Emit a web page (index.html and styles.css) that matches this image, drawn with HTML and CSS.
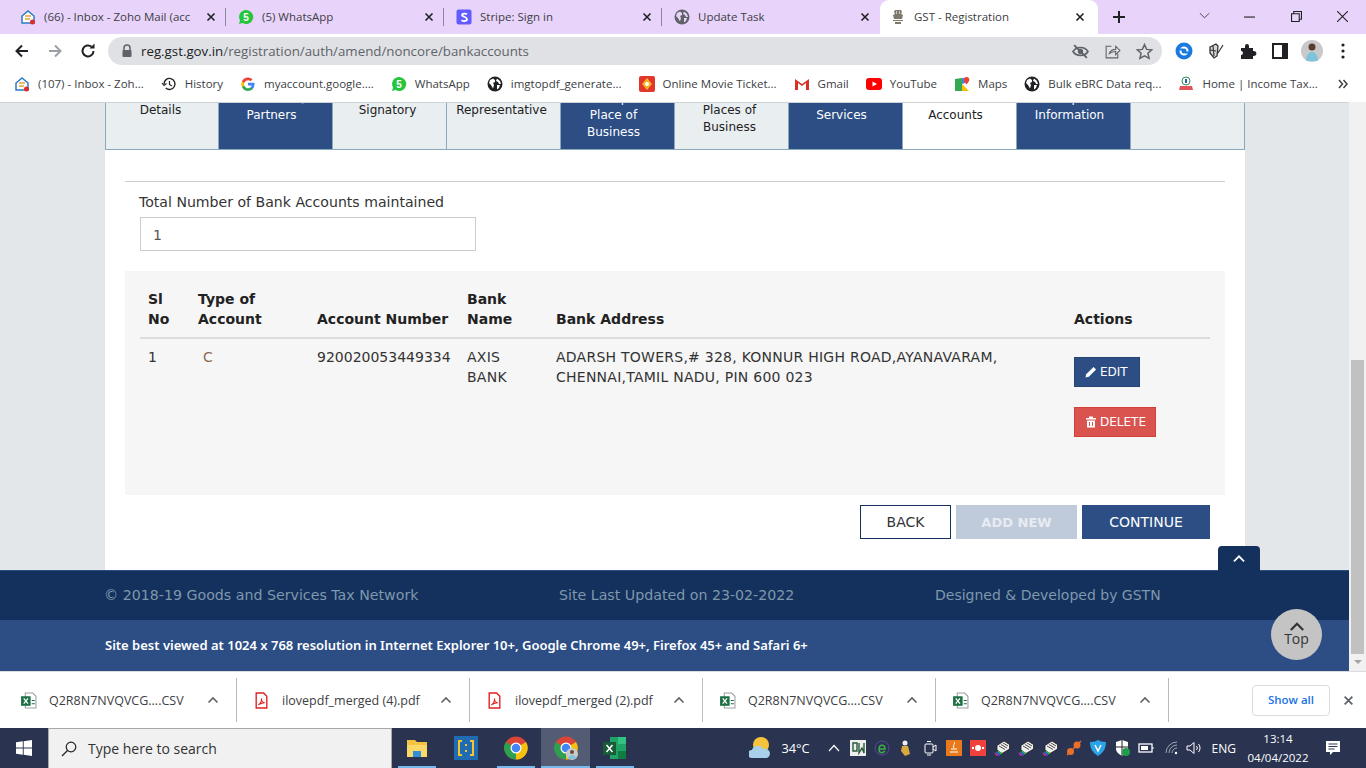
FILE: index.html
```html
<!DOCTYPE html>
<html lang="en">
<head>
    <meta charset="UTF-8">
    <title>GST - Registration</title>
    <link rel="stylesheet" href="styles.css">
</head>
<body>
    <svg width="0" height="0" class="defs">
        <symbol id="ic-globe" viewBox="0 0 16 16"><circle cx="8" cy="8" r="7.500" fill="#202124"/><path d="M3 4l3-1.500 2 1.500 0 2-2 1 1 2-1 3.500-2-3.500-2-2zM10 2.500l3 2.500 1 3-2 0-1-2-2-1zM10 9l3 0-1 3-2 1.500z" fill="#fff"/></symbol>
        <symbol id="ic-zoho" viewBox="0 0 16 16"><path d="M2 7l6-5 6 5v7H2z" fill="#fff" stroke="#2c7bc4" stroke-width="1.500"/><path d="M5 7h6M5 10h5" stroke="#e3a63a" stroke-width="1.500"/><circle cx="12.500" cy="13" r="2.500" fill="#e02b2b"/></symbol>
        <symbol id="ic-wa" viewBox="0 0 16 16"><path d="M8 1a7 7 0 0 0-6 10.500L1 15l3.600-1A7 7 0 1 0 8 1z" fill="#25c63e"/><text x="8" y="11.500" font-size="10" font-weight="700" text-anchor="middle" fill="#fff" font-family="Liberation Sans">5</text></symbol>
        <symbol id="ic-xls" viewBox="0 0 16 16"><path d="M5 1h7l3 3v11H5z" fill="#fff" stroke="#9aa0a6"/><rect x="1" y="4" width="9" height="9" fill="#1d7044"/><path d="M3.500 6l4 5M7.500 6l-4 5" stroke="#fff" stroke-width="1.200"/><path d="M11 8h3M11 11h3" stroke="#1d7044"/></symbol>
        <symbol id="ic-pdf" viewBox="0 0 16 16"><path d="M3 1h7l3 3v11H3z" fill="#fff" stroke="#e02020" stroke-width="1.300"/><path d="M5 12c2-1 3-4 3-6 0 3 2 4 3 4-2 0-4 1-6 2z" fill="none" stroke="#e02020"/></symbol>
        <symbol id="ic-chev" viewBox="0 0 12 8"><path d="M1.500 6.500L6 2l4.500 4.500" fill="none" stroke="currentColor" stroke-width="1.600"/></symbol>
        <symbol id="ic-close" viewBox="0 0 10 10"><path d="M1.500 1.500l7 7M8.500 1.500l-7 7" fill="none" stroke="currentColor" stroke-width="1.600"/></symbol>
        <symbol id="ic-printer" viewBox="0 0 16 16"><path d="M3 5.500L10 1l5.500 3.500V9L8 13.500 3 10z" fill="#f0f0f0" stroke="#222" stroke-width=".8"/><path d="M5 6l6 3.500M7 4.500l6 3.500M9 3l5 3" stroke="#222" stroke-width=".8"/><path d="M4 11l3.500 3" stroke="#2ad02a" stroke-width="1.500"/><path d="M2.500 12l3.500 3" stroke="#2f6bff" stroke-width="1.500"/><path d="M1 13l3 3" stroke="#d0309a" stroke-width="1.500"/></symbol>
    </svg>

    <div class="screen">
        <div class="tabstrip">
            <div class="tab">
                <svg class="fav"><use href="#ic-zoho"/></svg>
                <span class="tab-title">(66) - Inbox - Zoho Mail (acc</span>
                <svg class="tab-x"><use href="#ic-close"/></svg>
            </div>
            <div class="tab">
                <svg class="fav"><use href="#ic-wa"/></svg>
                <span class="tab-title">(5) WhatsApp</span>
                <svg class="tab-x"><use href="#ic-close"/></svg>
            </div>
            <div class="tab">
                <svg class="fav" viewBox="0 0 16 16"><rect x="0.500" y="0.500" width="15" height="15" rx="2" fill="#635bff"/><path d="M11 5.200C10 4.500 6 4 6 6c0 2 5 1.500 5 4.300 0 2.200-4 2-5.500 1" fill="none" stroke="#fff" stroke-width="1.800"/></svg>
                <span class="tab-title">Stripe: Sign in</span>
                <svg class="tab-x"><use href="#ic-close"/></svg>
            </div>
            <div class="tab">
                <svg class="fav" viewBox="0 0 16 16"><circle cx="8" cy="8" r="7.500" fill="#5f6368"/><path d="M3 4l3-1.500 2 1.500 0 2-2 1 1 2-1 3.500-2-3.500-2-2zM10 2.500l3 2.500 1 3-2 0-1-2-2-1zM10 9l3 0-1 3-2 1.500z" fill="#e8d3fb"/></svg>
                <span class="tab-title">Update Task</span>
                <svg class="tab-x"><use href="#ic-close"/></svg>
            </div>
            <div class="tab tab-active">
                <svg class="fav" viewBox="0 0 16 16"><path d="M5 1h6l1 2-1 2 2 1-1 4H4L3 6l2-1-1-2zM3 11h10v1H3zM5 13h6v2H5z" fill="#7d786c"/><path d="M6.500 2v3M9.500 2v3" stroke="#fff" stroke-width=".6"/></svg>
                <span class="tab-title">GST - Registration</span>
                <svg class="tab-x"><use href="#ic-close"/></svg>
            </div>
            <svg class="newtab" viewBox="0 0 14 14"><path d="M7 1v12M1 7h12" stroke="#202124" stroke-width="2"/></svg>
            <div class="win-btns">
                <svg class="win-ic win-drop" viewBox="0 0 12 8"><path d="M1 1l5 5 5-5" fill="none" stroke="#3c3c3c"/></svg>
                <svg class="win-ic win-min" viewBox="0 0 10 10"><path d="M0 5.500h10" stroke="#202124"/></svg>
                <svg class="win-ic win-max" viewBox="0 0 10 10"><path d="M.5 2.500h7v7h-7zM2.500 2.500v-2h7v7h-2" fill="none" stroke="#202124"/></svg>
                <svg class="win-ic win-cl" viewBox="0 0 10 10"><path d="M0 0l10 10M10 0L0 10" stroke="#202124"/></svg>
            </div>
        </div>

        <div class="toolbar">
            <svg class="nav-ic" viewBox="0 0 16 16"><path d="M14 8H3M8 2.500L2.500 8 8 13.500" fill="none" stroke="#202124" stroke-width="2"/></svg>
            <svg class="nav-ic" viewBox="0 0 16 16"><path d="M2 8h11M8 2.500L13.500 8 8 13.500" fill="none" stroke="#9aa0a6" stroke-width="2"/></svg>
            <svg class="nav-ic" viewBox="0 0 16 16"><path d="M13.500 8A5.500 5.500 0 1 1 11.500 3.700" fill="none" stroke="#202124" stroke-width="2"/><path d="M9.500 5.500H14.500V.5z" fill="#202124"/></svg>
            <div class="omnibox">
                <svg class="lock" viewBox="0 0 12 14"><path d="M3 6V4a3 3 0 0 1 6 0v2" fill="none" stroke="#5f6368" stroke-width="1.500"/><rect x="1.500" y="6" width="9" height="7" rx="1" fill="#5f6368"/></svg>
                <span class="url"><span class="url-host">reg.gst.gov.in</span>/registration/auth/amend/noncore/bankaccounts</span>
                <svg class="omni-ic" viewBox="0 0 16 16"><path d="M1 8c3-5 11-5 14 0-3 5-11 5-14 0z" fill="none" stroke="#5f6368" stroke-width="1.600"/><circle cx="8" cy="8" r="2.500" fill="#5f6368"/><path d="M2 2l12 12" stroke="#5f6368" stroke-width="1.800"/></svg>
                <svg class="omni-ic" viewBox="0 0 16 16"><path d="M7 3H2v11h11v-4" fill="none" stroke="#5f6368"/><path d="M5 10c1-3 3-4 6-4V3l4 4-4 4V8c-3 0-4 .5-6 2z" fill="none" stroke="#5f6368"/></svg>
                <svg class="omni-ic" viewBox="0 0 16 16"><path d="M8 1.500l2 4.500 4.800.4-3.600 3.200 1.100 4.800L8 12l-4.300 2.400 1.100-4.800L1.200 6.400 6 6z" fill="none" stroke="#5f6368" stroke-width="1.400"/></svg>
            </div>
            <div class="ext-row">
                <svg class="ext-ic" viewBox="0 0 18 18"><circle cx="9" cy="9" r="8.500" fill="#1a7ae0"/><circle cx="9" cy="9" r="3.500" fill="none" stroke="#fff" stroke-width="2"/><path d="M3 7.500h5M10 10.500h5" stroke="#1a7ae0" stroke-width="2"/></svg>
                <svg class="ext-ic" viewBox="0 0 18 18"><path d="M3 5l6-3 2 2-1 10-3 2-4-5z" fill="#d8d8d8" stroke="#333" stroke-width="1.300"/><path d="M11 11l5-8M6 4l1 10M3 8l6 1" fill="none" stroke="#333" stroke-width="1.200"/></svg>
                <svg class="ext-ic" viewBox="0 0 18 18"><path d="M2 6h4V4a2 2 0 0 1 4 0v2h4v3h1a2.500 2.500 0 0 1 0 5h-1v3H2v-4a2 2 0 0 0 0-4z" fill="#202124"/></svg>
                <svg class="ext-ic" viewBox="0 0 18 18"><path d="M2 2h14v14H2z" fill="#fff" stroke="#202124" stroke-width="2"/><path d="M11 2h5v14h-5z" fill="#202124"/></svg>
                <svg class="avatar" viewBox="0 0 22 22"><circle cx="11" cy="11" r="11" fill="#c9c9c9"/><circle cx="11" cy="7" r="3.500" fill="#5a3c2e"/><path d="M5 21c0-6 3-9 6-9s6 3 6 9z" fill="#7fc4dc"/></svg>
                <svg class="menu-dots" viewBox="0 0 4 16"><circle cx="2" cy="2" r="1.600"/><circle cx="2" cy="8" r="1.600"/><circle cx="2" cy="14" r="1.600"/></svg>
            </div>
        </div>

        <div class="bookmarks">
            <div class="bm"><svg class="fav"><use href="#ic-zoho"/></svg><span>(107) - Inbox - Zoh...</span></div>
            <div class="bm"><svg class="fav" viewBox="0 0 16 16"><path d="M3 8a5.500 5.500 0 1 1 1.800 4" fill="none" stroke="#202124" stroke-width="1.400"/><path d="M1 7l2 2.500L5.500 7.500M8.500 5v3.500l2.500 1.500" fill="none" stroke="#202124" stroke-width="1.200"/></svg><span>History</span></div>
            <div class="bm"><svg class="fav" viewBox="0 0 16 16"><path d="M14.500 8.200c0-.5 0-1-.1-1.400H8v2.700h3.700a3.200 3.200 0 0 1-1.400 2.100v1.700h2.200a6.600 6.600 0 0 0 2-5.100z" fill="#4285f4"/><path d="M8 15c1.900 0 3.400-.6 4.500-1.700l-2.200-1.700a4 4 0 0 1-6.100-2.100H2v1.800A6.700 6.700 0 0 0 8 15z" fill="#34a853"/><path d="M4.200 9.500a4 4 0 0 1 0-2.600V5.100H2a6.700 6.700 0 0 0 0 6.200z" fill="#fbbc05"/><path d="M8 4.200c1 0 1.900.4 2.600 1l1.900-2A6.700 6.700 0 0 0 2 5.100l2.200 1.800A4 4 0 0 1 8 4.200z" fill="#ea4335"/></svg><span>myaccount.google....</span></div>
            <div class="bm"><svg class="fav"><use href="#ic-wa"/></svg><span>WhatsApp</span></div>
            <div class="bm"><svg class="fav"><use href="#ic-globe"/></svg><span>imgtopdf_generate...</span></div>
            <div class="bm"><svg class="fav" viewBox="0 0 16 16"><rect width="16" height="16" rx="2" fill="#e2362b"/><path d="M8 2l5 6-5 6-5-6z" fill="#f5b324"/><circle cx="8" cy="8" r="2" fill="#fff"/></svg><span>Online Movie Ticket...</span></div>
            <div class="bm"><svg class="fav" viewBox="0 0 16 16"><path d="M1 3v11h3V7l4 3 4-3v7h3V3l-7 5z" fill="#d93025"/></svg><span>Gmail</span></div>
            <div class="bm"><svg class="fav" viewBox="0 0 16 16"><rect y="2" width="16" height="12" rx="3" fill="#f00"/><path d="M6.500 5.500v5L11 8z" fill="#fff"/></svg><span>YouTube</span></div>
            <div class="bm"><svg class="fav" viewBox="0 0 16 16"><path d="M1 3l7-1v13l-7 0z" fill="#34a853"/><path d="M8 8l7 7H8z" fill="#fbbc05"/><path d="M8 2h3v5L8 8z" fill="#4285f4"/><path d="M12.500 1a2.800 2.800 0 0 1 2.800 2.800c0 2-2.800 4.700-2.800 4.700S9.700 5.800 9.700 3.800A2.800 2.800 0 0 1 12.500 1z" fill="#ea4335"/></svg><span>Maps</span></div>
            <div class="bm"><svg class="fav"><use href="#ic-globe"/></svg><span>Bulk eBRC Data req...</span></div>
            <div class="bm"><svg class="fav" viewBox="0 0 16 16"><circle cx="8" cy="5" r="4" fill="#fff" stroke="#2a8a5a"/><path d="M7 3h2v4H7z" fill="#2c5fa0"/><path d="M2 10h12l1 4H1z" fill="#e0555a"/></svg><span>Home | Income Tax...</span></div>
            <svg class="bm-more" viewBox="0 0 10 10"><path d="M1 1l3.500 4L1 9M5.500 1L9 5 5.500 9" fill="none" stroke="#3c4043" stroke-width="1.500"/></svg>
        </div>

        <div class="viewport">
            <div class="page">
                <div class="sheet">
                    <div class="steps">
                        <div class="step step-plain step-first">Business<br>Details</div>
                        <div class="step step-done">Promoters /<br>Partners</div>
                        <div class="step step-plain">Authorized<br>Signatory</div>
                        <div class="step step-plain">Authorized<br>Representative</div>
                        <div class="step step-done">Principal<br>Place of<br>Business</div>
                        <div class="step step-plain">Additional<br>Places of<br>Business</div>
                        <div class="step step-done">Goods and<br>Services</div>
                        <div class="step step-active">Bank<br>Accounts</div>
                        <div class="step step-done">State Specific<br>Information</div>
                    </div>

                    <div class="form-body">
                        <hr class="rule">
                        <label class="field-label">Total Number of Bank Accounts maintained</label>
                        <div class="count-box">1</div>

                        <div class="table-wrap">
                            <table class="accounts">
                                <thead>
                                    <tr>
                                        <th class="col-sl">Sl<br>No</th>
                                        <th class="col-type">Type of<br>Account</th>
                                        <th class="col-num">Account Number</th>
                                        <th class="col-bank">Bank<br>Name</th>
                                        <th class="col-addr">Bank Address</th>
                                        <th>Actions</th>
                                    </tr>
                                </thead>
                                <tbody>
                                    <tr>
                                        <td>1</td>
                                        <td class="type-val">C</td>
                                        <td>920020053449334</td>
                                        <td class="caps">AXIS<br>BANK</td>
                                        <td class="caps">ADARSH TOWERS,# 328, KONNUR HIGH ROAD,AYANAVARAM, CHENNAI,TAMIL NADU, PIN 600 023</td>
                                        <td>
                                            <button class="btn-row btn-edit"><svg class="btn-ic" viewBox="0 0 12 12"><path d="M.5 11.500l.7-3.300L8.500.9l2.600 2.600-7.300 7.300z" fill="#fff"/></svg>EDIT</button>
                                            <button class="btn-row btn-del"><svg class="btn-ic" viewBox="0 0 12 12"><path d="M4 .5h4v1.500h3v1.500H1V2h3zM2 4.500h8V11.500H2z" fill="#fff"/><path d="M4.500 6v4M7.500 6v4" stroke="#d9534f"/></svg>DELETE</button>
                                        </td>
                                    </tr>
                                </tbody>
                            </table>
                        </div>

                        <div class="form-actions">
                            <button class="btn-form btn-back">BACK</button>
                            <button class="btn-form btn-add">ADD NEW</button>
                            <button class="btn-form btn-continue">CONTINUE</button>
                        </div>
                    </div>
                </div>

                <div class="foot-top">
                    <div class="foot-row">
                        <span class="foot-a">© 2018-19 Goods and Services Tax Network</span>
                        <span class="foot-b">Site Last Updated on 23-02-2022</span>
                        <span class="foot-c">Designed &amp; Developed by GSTN</span>
                    </div>
                    <div class="foot-tab"><svg class="foot-chev"><use href="#ic-chev"/></svg></div>
                </div>
                <div class="foot-bottom">Site best viewed at 1024 x 768 resolution in Internet Explorer 10+, Google Chrome 49+, Firefox 45+ and Safari 6+</div>
                <div class="top-btn"><svg class="top-chev"><use href="#ic-chev"/></svg><span>Top</span></div>
            </div>
            <div class="scrollbar">
                <div class="sb-arrow sb-up"></div>
                <div class="sb-track"><div class="sb-thumb"></div></div>
                <div class="sb-arrow sb-down"></div>
            </div>
        </div>

        <div class="downloads">
            <div class="dl"><svg class="dl-ic"><use href="#ic-xls"/></svg><span class="dl-name">Q2R8N7NVQVCG....CSV</span><svg class="dl-chev"><use href="#ic-chev"/></svg></div>
            <div class="dl"><svg class="dl-ic"><use href="#ic-pdf"/></svg><span class="dl-name">ilovepdf_merged (4).pdf</span><svg class="dl-chev"><use href="#ic-chev"/></svg></div>
            <div class="dl"><svg class="dl-ic"><use href="#ic-pdf"/></svg><span class="dl-name">ilovepdf_merged (2).pdf</span><svg class="dl-chev"><use href="#ic-chev"/></svg></div>
            <div class="dl"><svg class="dl-ic"><use href="#ic-xls"/></svg><span class="dl-name">Q2R8N7NVQVCG....CSV</span><svg class="dl-chev"><use href="#ic-chev"/></svg></div>
            <div class="dl"><svg class="dl-ic"><use href="#ic-xls"/></svg><span class="dl-name">Q2R8N7NVQVCG....CSV</span><svg class="dl-chev"><use href="#ic-chev"/></svg></div>
            <button class="show-all">Show all</button>
            <svg class="dl-close"><use href="#ic-close"/></svg>
        </div>

        <div class="taskbar">
            <div class="start"><svg class="start-ic" viewBox="0 0 16 16"><path d="M0 2.300l6.800-1v6.300H0zM7.700 1.200L16 0v7.600H7.700zM0 8.400h6.800v6.300l-6.800-1zM7.700 8.400H16V16l-8.300-1.200z" fill="#fff"/></svg></div>
            <div class="search"><svg class="search-ic" viewBox="0 0 16 16"><circle cx="10" cy="6" r="4.800" fill="none" stroke="#222" stroke-width="1.200"/><path d="M6.500 9.500L1 15" stroke="#222" stroke-width="1.200"/></svg><span>Type here to search</span></div>
            <div class="task-apps">
                <div class="app app-open"><svg class="app-ic" viewBox="0 0 24 24"><path d="M2 4h8l2 2h10v15H2z" fill="#f5c342"/><path d="M2 9h20v12H2z" fill="#fbd968"/><path d="M8 15h8v6H8z" fill="#2f8fd8"/></svg></div>
                <div class="app"><svg class="app-ic" viewBox="0 0 24 24"><rect width="24" height="24" fill="#1f6cb0"/><path d="M8 5H5v14h3M16 5h3v14h-3" fill="none" stroke="#f7c32e" stroke-width="2"/><path d="M12 8v2M12 14v2" stroke="#f7c32e" stroke-width="2"/></svg></div>
                <div class="app app-open"><svg class="app-ic" viewBox="0 0 24 24"><circle cx="12" cy="12" r="11.500" fill="#db4437"/><path d="M12 12L22 6a11.500 11.500 0 0 1-10 17.500z" fill="#f4c20d"/><path d="M12 12L12 23.500A11.500 11.500 0 0 1 1.800 6z" fill="#2e9e4f"/><circle cx="12" cy="12" r="5.500" fill="#fff"/><circle cx="12" cy="12" r="4.300" fill="#4285f4"/></svg></div>
                <div class="app app-open app-cur"><svg class="app-ic" viewBox="0 0 24 24"><circle cx="12" cy="12" r="11.500" fill="#db4437"/><path d="M12 12L22 6a11.500 11.500 0 0 1-10 17.500z" fill="#f4c20d"/><path d="M12 12L12 23.500A11.500 11.500 0 0 1 1.800 6z" fill="#2e9e4f"/><circle cx="12" cy="12" r="5.500" fill="#fff"/><circle cx="12" cy="12" r="4.300" fill="#4285f4"/><circle cx="18" cy="18" r="6" fill="#c9c9c9"/><path d="M14 23c0-3 2-4 4-4s4 1 4 4z" fill="#7fc4dc"/><circle cx="18" cy="16" r="2" fill="#6b4a3a"/></svg></div>
                <div class="app app-open"><svg class="app-ic" viewBox="0 0 24 24"><path d="M7 1h16v22H7z" fill="#21a366"/><path d="M15 1h8v7h-8z" fill="#33c481"/><path d="M15 15h8v8h-8z" fill="#107c41"/><rect y="6" width="13" height="13" fill="#185c37"/><path d="M3.500 9l6 7M9.500 9l-6 7" stroke="#fff" stroke-width="1.500"/></svg></div>
            </div>
            <div class="tray">
                <svg class="weather" viewBox="0 0 22 24"><circle cx="12" cy="9" r="8" fill="#f6c33a"/><path d="M3 22a4 4 0 0 1 0-8 6 6 0 0 1 11-1 4.500 4.500 0 0 1 4 9z" fill="#a8d0ea"/></svg>
                <span class="temp">34°C</span>
                <svg class="tray-up" viewBox="0 0 12 8"><path d="M1 7l5-5.500L11 7" fill="none" stroke="#fff" stroke-width="1.200"/></svg>
                <svg class="tray-ic" viewBox="0 0 16 16"><rect width="16" height="16" fill="#eee"/><path d="M3 3h4v8H3zM9 3v10l3-5 2 5V3" fill="none" stroke="#2a5a3a" stroke-width="1.400"/></svg>
                <svg class="tray-ic" viewBox="0 0 16 16"><circle cx="8" cy="8" r="7" fill="none" stroke="#5a4a9a"/><path d="M5 9h6c0-5-6-5-6 0s4 4 6 2" fill="none" stroke="#3fae48" stroke-width="1.500"/></svg>
                <svg class="tray-ic" viewBox="0 0 16 16"><circle cx="7" cy="3" r="2.500" fill="#eee"/><path d="M4 6h6l2 8-5 2-4-5z" fill="#d9a83e"/></svg>
                <svg class="tray-ic" viewBox="0 0 16 16"><rect x="3" y="4" width="8" height="9" rx="1" fill="none" stroke="#fff"/><path d="M11 7l3-2v6l-3-2" fill="none" stroke="#fff"/><path d="M5 1.500h4M5 15h4" stroke="#fff"/></svg>
                <svg class="tray-ic" viewBox="0 0 16 16"><rect width="16" height="16" fill="#e87a1d"/><path d="M4 12h8M5 9h6M8 2c2 2-2 3 0 6" fill="none" stroke="#fff"/></svg>
                <svg class="tray-ic" viewBox="0 0 16 16"><rect width="16" height="16" fill="#f0413c"/><circle cx="8" cy="8" r="3" fill="#fff"/><path d="M2 8h2M12 8h2" stroke="#fff" stroke-width="2"/></svg>
                <svg class="tray-ic"><use href="#ic-printer"/></svg>
                <svg class="tray-ic"><use href="#ic-printer"/></svg>
                <svg class="tray-ic"><use href="#ic-printer"/></svg>
                <svg class="tray-ic" viewBox="0 0 16 16"><circle cx="4.500" cy="11.500" r="3.500" fill="#e8702a"/><circle cx="11" cy="5" r="3.500" fill="#e8702a"/><path d="M1 15l2-2M7 9l2-2M13 3l2-2" stroke="#e8702a" stroke-width="1.300"/></svg>
                <svg class="tray-ic" viewBox="0 0 16 16"><path d="M0 2c4 0 6-1 8-2 2 1 4 2 8 2 0 7-3 11-8 14C3 13 0 9 0 2z" fill="#2aa3e8"/><path d="M5 5l3 6 3-6" fill="none" stroke="#fff" stroke-width="1.500"/></svg>
                <svg class="tray-ic" viewBox="0 0 16 16"><path d="M2 2l6-2 6 2v7c0 3-3 5-6 7-3-2-6-4-6-7z" fill="#fff"/><path d="M8 0v16M2 7h12" stroke="#222"/><circle cx="12" cy="12" r="4" fill="#1e9e4a"/></svg>
                <svg class="tray-ic" viewBox="0 0 16 16"><rect x="1" y="4" width="13" height="8" fill="none" stroke="#fff" stroke-width="1.300"/><rect x="3" y="6" width="7" height="4" fill="#fff"/><path d="M15 7v2" stroke="#fff"/></svg>
                <svg class="tray-ic tray-wifi" viewBox="0 0 16 16"><path d="M2 13a11 11 0 0 1 11-11M5 13a8 8 0 0 1 8-8M8 13a5 5 0 0 1 5-5" fill="none" stroke="#9aa7b5"/><circle cx="12" cy="13" r="1.200" fill="#fff"/></svg>
                <svg class="tray-ic" viewBox="0 0 16 16"><path d="M1 6h3l4-3.500v11L4 10H1z" fill="none" stroke="#fff"/><path d="M10.500 6a3 3 0 0 1 0 4M12.500 4a6 6 0 0 1 0 8" fill="none" stroke="#fff"/></svg>
                <span class="lang">ENG</span>
                <div class="clock"><span>13:14</span><span>04/04/2022</span></div>
                <svg class="notif" viewBox="0 0 16 16"><path d="M1 1h14v11H8l-3 3v-3H1z" fill="#fff"/><path d="M3.500 4h9M3.500 6.500h9M3.500 9h6" stroke="#2a3350"/></svg>
            </div>
        </div>
    </div>
</body>
</html>
```

FILE: styles.css
```css
* {
    box-sizing: border-box;
}
html, body {
    margin: 0;
    height: 100%;
    overflow: hidden;
}
body {
    font-family: "Liberation Sans", Arial, sans-serif;
    color: #202124;
}
.defs {
    position: absolute;
}
.screen {
    width: 1366px;
    height: 768px;
    display: flex;
    flex-direction: column;
}

/* Browser tabs */
.tabstrip {
    height: 34px;
    background-color: #e8d3fb;
    display: flex;
    align-items: center;
    padding-left: 8px;
    flex-shrink: 0;
}
.tab {
    width: 218px;
    height: 34px;
    padding: 0 7px 0 12px;
    display: flex;
    align-items: center;
    font-family: "Open Sans", sans-serif;
    font-size: 11.500px;
    color: #3c4043;
    position: relative;
}
.tab:nth-child(-n+3)::after {
    content: "";
    position: absolute;
    right: 0;
    top: 8px;
    height: 18px;
    width: 1px;
    background-color: #8d8696;
}
.tab-active {
    background-color: #fff;
    border-radius: 9px 9px 0 0;
    padding: 0 10px;
}
.fav {
    width: 16px;
    height: 16px;
    flex-shrink: 0;
}
.tab-title {
    margin: 0 0 2px 8px;
    flex: 1;
    white-space: nowrap;
    overflow: hidden;
}
.tab-x {
    width: 10px;
    height: 10px;
    color: #202124;
    flex-shrink: 0;
    margin-right: 3px;
}
.newtab {
    width: 14px;
    height: 14px;
    margin-left: 14px;
}
.win-btns {
    margin-left: auto;
    display: flex;
    align-items: center;
    height: 30px;
    padding-bottom: 2px;
}
.win-ic {
    width: 11px;
    height: 11px;
}
.win-drop {
    height: 8px;
    margin-right: 34px;
}
.win-min {
    margin-right: 36px;
}
.win-max {
    margin-right: 35px;
}
.win-cl {
    margin-right: 18px;
}

/* Address bar */
.toolbar {
    height: 34px;
    background-color: #fff;
    display: flex;
    align-items: center;
    padding: 0 0 0 14px;
    flex-shrink: 0;
}
.nav-ic {
    width: 16px;
    height: 16px;
    margin-right: 17px;
}
.nav-ic:nth-child(3) {
    margin-right: 12px;
}
.omnibox {
    width: 1054px;
    height: 28px;
    border-radius: 14px;
    background-color: #dfe1e5;
    display: flex;
    align-items: center;
    padding: 0 9px 0 13px;
}
.lock {
    width: 12px;
    height: 14px;
}
.url {
    margin-left: 8px;
    font-family: "Open Sans", sans-serif;
    font-size: 13.300px;
    color: #5f6368;
    flex: 1;
}
.url-host {
    color: #202124;
}
.omni-ic {
    width: 17px;
    height: 17px;
    margin-left: 15px;
}
.ext-row {
    display: flex;
    align-items: center;
    margin-left: 13px;
}
.ext-ic {
    width: 18px;
    height: 18px;
    margin-right: 14px;
}
.avatar {
    width: 22px;
    height: 22px;
    margin-left: -2px;
}
.menu-dots {
    width: 4px;
    height: 16px;
    margin-left: 18px;
    fill: #202124;
}

/* Bookmarks */
.bookmarks {
    height: 34px;
    background-color: #fff;
    display: flex;
    align-items: center;
    padding: 0 0 3px 14px;
    font-family: "Open Sans", sans-serif;
    font-size: 11.500px;
    color: #3c4043;
    flex-shrink: 0;
}
.bm {
    display: flex;
    align-items: center;
    margin-right: 17px;
    white-space: nowrap;
}
.bm span {
    margin-left: 8px;
}
.bm-more {
    width: 10px;
    height: 10px;
    margin-left: auto;
    margin-right: 18px;
    flex-shrink: 0;
}

/* Page */
.viewport {
    height: 569px;
    display: flex;
    flex-shrink: 0;
    overflow: hidden;
}
.page {
    width: 1349px;
    background-color: #e3e7ea;
    position: relative;
    overflow: hidden;
    border-top: 1px solid #d0d3d6;
}
.sheet {
    width: 1140px;
    height: 467px;
    margin-left: 105px;
    background-color: #fff;
}
.steps {
    display: flex;
    height: 47px;
    width: 1140px;
    background-color: #e9eef1;
    border: 1px solid #8aa9bc;
    border-top: 0;
    line-height: 17px;
    text-align: center;
}
.step {
    width: 114px;
    height: 64px;
    margin-top: -18px;
    padding-right: 4px;
    border-right: 1px solid #8aa9bc;
    flex-shrink: 0;
    font-family: "DejaVu Sans", sans-serif;
    font-size: 12px;
    overflow: hidden;
}
.step-first {
    width: 113px;
    padding-right: 3px;
}
.step-plain {
    color: #212121;
}
.step-done {
    background-color: #2c4e85;
    color: #fff;
    padding: 5px 8px 0 0;
}
.step-active {
    background-color: #fff;
    color: #212121;
    padding: 5px 8px 0 0;
}
.form-body {
    padding: 31px 20px 0;
}
.rule {
    margin: 0;
    border: 0;
    border-top: 1px solid #cdd0d2;
}
.field-label {
    display: block;
    margin: 11px 0 0 14px;
    font-family: "DejaVu Sans", sans-serif;
    font-size: 14.100px;
    line-height: 18px;
    color: #333;
}
.count-box {
    margin: 6px 0 0 15px;
    width: 336px;
    height: 34px;
    border: 1px solid #ccc;
    padding: 0 12px;
    font-family: "DejaVu Sans", sans-serif;
    font-size: 14px;
    line-height: 34px;
    color: #555;
}
.table-wrap {
    margin-top: 20px;
    height: 224px;
    background-color: #f6f6f6;
    padding: 18px 15px 0 15px;
}
.accounts {
    width: 1070px;
    border-collapse: collapse;
    table-layout: fixed;
    font-family: "DejaVu Sans", sans-serif;
    font-size: 14px;
    line-height: 20px;
    color: #333;
}
.accounts th {
    text-align: left;
    vertical-align: bottom;
    font-weight: 700;
    padding: 0 8px 8px;
    border-bottom: 2px solid #dcdcdc;
    color: #222;
}
.accounts td {
    vertical-align: top;
    padding: 8px 8px 0;
}
.col-sl {
    width: 50px;
}
.col-type {
    width: 119px;
}
.col-num {
    width: 150px;
}
.col-bank {
    width: 89px;
}
.col-addr {
    width: 518px;
}
.accounts td.type-val {
    padding-left: 13px;
    color: #8a6a50;
}
.accounts td.caps {
    letter-spacing: .25px;
}
.btn-row {
    display: flex;
    align-items: center;
    height: 30px;
    padding: 0 0 0 10px;
    border-radius: 0;
    color: #fff;
    font-family: "DejaVu Sans", sans-serif;
    font-size: 12px;
    border: 1px solid;
}
.btn-ic {
    width: 12px;
    height: 12px;
    margin-right: 3px;
}
.btn-edit {
    width: 66px;
    background-color: #2c4e85;
    border-color: #264474;
    margin-top: 10px;
}
.btn-del {
    width: 82px;
    background-color: #d9534f;
    border-color: #d43f3a;
    margin-top: 20px;
}
.form-actions {
    display: flex;
    justify-content: flex-end;
    margin: 10px 15px 0 0;
    gap: 5px;
}
.btn-form {
    height: 34px;
    font-family: "DejaVu Sans", sans-serif;
    font-size: 14px;
    border: 1px solid #2c4e85;
    padding: 0;
}
.btn-back {
    width: 91px;
    background-color: #fff;
    border-color: #14305c;
    color: #333;
}
.btn-add {
    width: 121px;
    background-color: #bfcadb;
    border-color: #bfcadb;
    color: #e8ecf2;
    font-size: 13px;
    font-weight: 700;
}
.btn-continue {
    width: 128px;
    background-color: #2c4e85;
    color: #fff;
}

/* Footer */
.foot-top {
    height: 50px;
    background-color: #14305c;
    position: relative;
    border-top: 1px solid #2c4e85;
}
.foot-row {
    margin-left: 104px;
    width: 1141px;
    height: 48px;
    display: flex;
    align-items: center;
    font-family: "DejaVu Sans", sans-serif;
    font-size: 14.200px;
    color: #7e98ad;
}
.foot-a {
    width: 455px;
}
.foot-b {
    width: 376px;
}
.foot-c {
    font-size: 14px;
}
.foot-tab {
    position: absolute;
    left: 1218px;
    top: -25px;
    width: 42px;
    height: 25px;
    background-color: #14305c;
    border-radius: 4px 4px 0 0;
    display: flex;
    align-items: center;
    justify-content: center;
    color: #fff;
}
.foot-chev {
    width: 14px;
    height: 9px;
}
.foot-bottom {
    height: 51px;
    background-color: #2c4e85;
    color: #fff;
    padding-left: 105px;
    font-family: "Noto Sans", sans-serif;
    font-size: 13px;
    font-weight: 600;
    line-height: 51px;
}
.top-btn {
    position: absolute;
    left: 1271px;
    top: 506px;
    width: 51px;
    height: 51px;
    border-radius: 50%;
    background-color: #c4c4c4;
    display: flex;
    flex-direction: column;
    align-items: center;
    color: #333;
    font-family: "Open Sans", sans-serif;
    font-size: 14px;
    line-height: 16px;
}
.top-chev {
    width: 18px;
    height: 11px;
    margin-top: 12px;
    margin-bottom: -1px;
    color: #333;
}

/* Scrollbar */
.scrollbar {
    width: 17px;
    background-color: #f1f1f1;
    display: flex;
    flex-direction: column;
}
.sb-arrow {
    height: 17px;
    flex-shrink: 0;
    position: relative;
}
.sb-track {
    flex: 1;
    position: relative;
}
.sb-thumb {
    position: absolute;
    left: 2px;
    right: 2px;
    top: 241px;
    bottom: 0;
    background-color: #c1c1c1;
}
.sb-down::after {
    content: "";
    position: absolute;
    left: 5px;
    top: 6px;
    border-left: 4px solid transparent;
    border-right: 4px solid transparent;
    border-top: 4px solid #a3a3a3;
}

/* Download shelf */
.downloads {
    height: 57px;
    background-color: #fff;
    display: flex;
    align-items: center;
    padding-right: 12px;
    flex-shrink: 0;
    font-family: "Open Sans", sans-serif;
    font-size: 12.500px;
    color: #3c4043;
    border-top: 1px solid #dadce0;
}
.dl {
    width: 233px;
    height: 44px;
    display: flex;
    align-items: center;
    padding-left: 16px;
    border-right: 1px solid #b9bcc0;
    flex-shrink: 0;
}
.dl:first-child {
    width: 237px;
    padding-left: 20px;
}
.dl-ic {
    width: 17px;
    height: 17px;
    flex-shrink: 0;
}
.dl-name {
    margin-left: 12px;
    flex: 1;
    white-space: nowrap;
}
.dl-chev {
    width: 12px;
    height: 8px;
    margin-right: 17px;
    color: #5f6368;
}
.show-all {
    margin-left: auto;
    width: 78px;
    height: 31px;
    padding: 0 0 2px;
    background-color: #fff;
    border: 1px solid #dadce0;
    border-radius: 4px;
    color: #1a73e8;
    font-family: "Open Sans", sans-serif;
    font-size: 11.500px;
    font-weight: 600;
}
.dl-close {
    width: 11px;
    height: 11px;
    margin-left: 13px;
    color: #5f6368;
}

/* Taskbar */
.taskbar {
    height: 40px;
    background-color: #2a3350;
    display: flex;
    flex-shrink: 0;
    color: #fff;
}
.start {
    width: 48px;
    display: flex;
    align-items: center;
    justify-content: center;
}
.start-ic {
    width: 16px;
    height: 16px;
}
.search {
    width: 344px;
    background-color: #f1f1f1;
    border: 1px solid #a8a8a8;
    border-bottom: 0;
    display: flex;
    align-items: center;
    padding-left: 12px;
    color: #333;
    font-family: "Open Sans", sans-serif;
    font-size: 14px;
}
.search-ic {
    width: 16px;
    height: 16px;
    margin-right: 11px;
}
.task-apps {
    display: flex;
}
.app {
    width: 49.600px;
    display: flex;
    align-items: center;
    justify-content: center;
    position: relative;
}
.app-open::after {
    content: "";
    position: absolute;
    left: 6px;
    right: 6px;
    bottom: 0;
    height: 2px;
    background-color: #76b9ed;
}
.app-cur {
    background-color: #535c73;
}
.app-cur::after {
    left: 0;
    right: 0;
}
.app-ic {
    width: 24px;
    height: 24px;
}
.tray {
    margin-left: auto;
    display: flex;
    align-items: center;
    padding-right: 25px;
    font-family: "Open Sans", sans-serif;
    font-size: 12px;
}
.weather {
    width: 22px;
    height: 24px;
}
.temp {
    margin: 0 18px 0 10px;
    font-size: 12.800px;
}
.tray-up {
    width: 12px;
    height: 8px;
    margin-right: 10px;
}
.tray-ic {
    width: 16px;
    height: 16px;
    margin-right: 8px;
}
.tray-wifi {
    margin-left: 2px;
    margin-right: 6px;
}
.lang {
    margin-left: 2px;
}
.clock {
    width: 58px;
    margin-left: 13px;
    display: flex;
    flex-direction: column;
    align-items: center;
    line-height: 19px;
    font-size: 11.500px;
    white-space: nowrap;
}
.notif {
    width: 16px;
    height: 16px;
    margin-left: 18px;
}
```
